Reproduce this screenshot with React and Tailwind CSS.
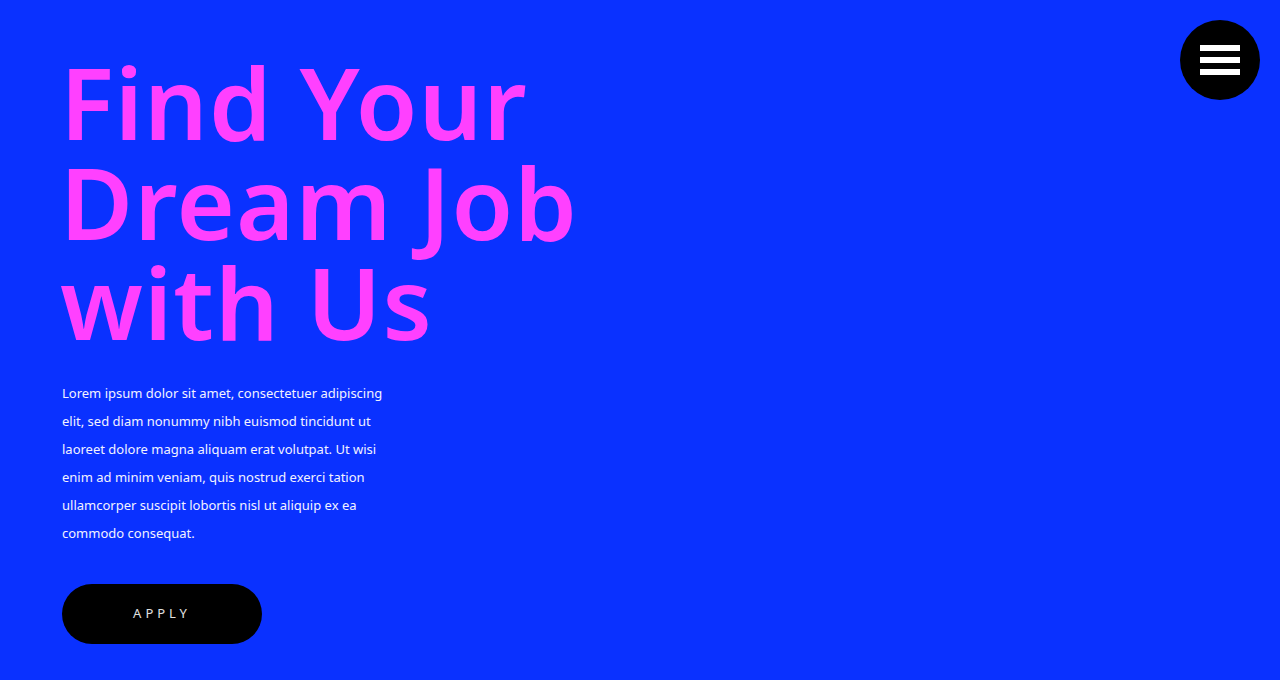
import React from 'react';

const App = () => {
  return (
    <div className="min-h-[680px] w-full bg-[#0a31ff] flex justify-between font-['Noto_Sans',sans-serif]">
      <div className="pl-[60px] pt-[51px]">
        <h1 className="text-[100px] leading-[100px] font-semibold text-[#ff40ff] tracking-[1px]">
          Find Your
          <br />
          Dream Job
          <br />
          with Us
        </h1>
        <p className="mt-[28px] ml-[2px] w-[330px] text-[13px] leading-[28px] text-[#f2f2ff]">
          Lorem ipsum dolor sit amet, consectetuer adipiscing elit, sed diam nonummy nibh euismod tincidunt ut laoreet dolore magna aliquam erat volutpat. Ut wisi enim ad minim veniam, quis nostrud exerci tation ullamcorper suscipit lobortis nisl ut aliquip ex ea commodo consequat.
        </p>
        <button className="mt-[37px] ml-[2px] w-[200px] h-[60px] rounded-full bg-black text-[#e0e0e0] text-[13px] tracking-[4px] flex items-center justify-center">
          APPLY
        </button>
      </div>
      <div className="pt-[20px] pr-[20px]">
        <button className="w-[80px] h-[80px] rounded-full bg-black flex flex-col items-center justify-center gap-[6px]">
          <span className="block w-[40px] h-[6px] bg-white"></span>
          <span className="block w-[40px] h-[6px] bg-white"></span>
          <span className="block w-[40px] h-[6px] bg-white"></span>
        </button>
      </div>
    </div>
  );
};

export default App;
